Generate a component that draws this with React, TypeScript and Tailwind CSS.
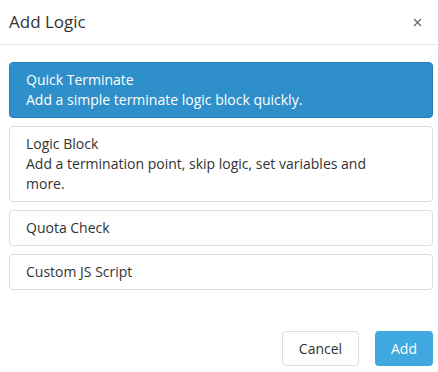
import { useState } from "react";

const options = [
  { title: "Quick Terminate", desc: "Add a simple terminate logic block quickly." },
  { title: "Logic Block", desc: "Add a termination point, skip logic, set variables and more." },
  { title: "Quota Check" },
  { title: "Custom JS Script" },
];

export default function App() {
  const [selected, setSelected] = useState(0);

  return (
    <div className="w-[438px] h-[372px] bg-white text-[#333] font-['Open_Sans',sans-serif] text-[14px] leading-[20px]">
      <div className="h-[45px] flex items-center justify-between pl-[9px] pr-[16px] border-b border-[#e5e5e5]">
        <h1 className="text-[17px] text-[#333]">Add Logic</h1>
        <button className="text-[#666]">
          <svg width="9" height="9" viewBox="0 0 9 9" fill="none" stroke="currentColor" strokeWidth="1.3">
            <path d="M1 1l7 7M8 1L1 8" />
          </svg>
        </button>
      </div>

      <div className="pl-[9px] pr-[5px] pt-[17px] flex flex-col gap-[8px]">
        {options.map((o, i) => (
          <button
            key={o.title}
            onClick={() => setSelected(i)}
            className={
              "text-left rounded-[4px] border px-[16px] py-[7px] " +
              (selected === i
                ? "bg-[#2e8fca] border-[#2a80b6] text-white"
                : "bg-white border-[#dddddd] text-[#333]")
            }
          >
            <div>{o.title}</div>
            {o.desc && <div className="pr-[40px]">{o.desc}</div>}
          </button>
        ))}
      </div>

      <div className="flex justify-end gap-[16px] pr-[5px] mt-[41px]">
        <button className="w-[77px] h-[35px] rounded-[4px] border border-[#dddddd] bg-white text-[#333]">Cancel</button>
        <button className="w-[58px] h-[35px] rounded-[4px] bg-[#3fa9df] text-white">Add</button>
      </div>
    </div>
  );
}
